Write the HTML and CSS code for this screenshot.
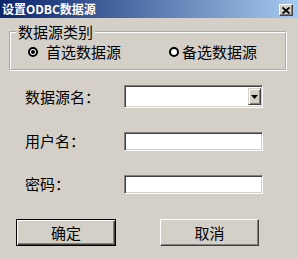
FILE: index.html
```html
<!DOCTYPE html>
<html>
<head>
    <meta charset="utf-8" />
    <title>设置ODBC数据源</title>
    <link rel="stylesheet" href="styles.css">
</head>
<body>
    <div class="titlebar">
        <span class="title">设置ODBC数据源</span>
        <span class="close">
            <svg width="8" height="7" viewBox="0 0 8 7"><path d="M0.5 0.5 L7.5 6.5 M7.5 0.5 L0.5 6.5" stroke="#000" stroke-width="1.8" /></svg>
        </span>
    </div>

    <div class="content">
        <fieldset class="group">
            <legend>数据源类别</legend>
            <div class="radios">
                <label class="radio-item first"><span class="radio checked"></span>首选数据源</label>
                <label class="radio-item second"><span class="radio"></span>备选数据源</label>
            </div>
        </fieldset>

        <div class="form">
            <span class="label">数据源名：</span>
            <div class="combo sunken">
                <span class="combo-text"></span>
                <span class="drop"><svg width="7" height="4" viewBox="0 0 7 4"><path d="M0 0 H7 L3.5 4 Z" fill="#000" /></svg></span>
            </div>

            <span class="label">用户名：</span>
            <div class="input sunken"></div>

            <span class="label">密码：</span>
            <div class="input sunken"></div>
        </div>

        <div class="buttons">
            <button class="btn default">确定</button>
            <button class="btn cancel">取消</button>
        </div>
    </div>
</body>
</html>
```

FILE: styles.css
```css
body {
    margin: 0;
    width: 298px;
    height: 259px;
    overflow: hidden;
    background-color: #d4d0c8;
    font-family: "Noto Sans CJK SC", "Liberation Sans", sans-serif;
    font-size: 15px;
    color: #000;
}

.titlebar {
    height: 18px;
    display: flex;
    justify-content: space-between;
    align-items: flex-start;
    padding: 0 5px 0 2px;
    background: linear-gradient(to right, #0a246a, #a6caf0);
}

.title {
    color: #fff;
    font-weight: bold;
    font-size: 12px;
    line-height: 18px;
}

.close {
    width: 14px;
    height: 12px;
    margin-top: 4px;
    box-sizing: border-box;
    display: flex;
    align-items: center;
    justify-content: center;
    background-color: #d4d0c8;
    border: 1px solid;
    border-color: #fff #404040 #404040 #fff;
    box-shadow: inset -1px -1px 0 #808080;
}

.content {
    padding: 5px 11px 0 9px;
}

.group {
    margin: 0;
    padding: 1px 0 7px 0;
    border: 2px groove #fff;
}

.group legend {
    margin-left: 5px;
    padding: 0 2px;
    line-height: 18px;
}

.radios {
    display: flex;
    height: 20px;
    align-items: center;
    padding-left: 17px;
}

.radio-item {
    display: flex;
    align-items: center;
    line-height: 20px;
}

.radio-item.first .radio {
    margin-right: 8px;
}

.radio-item.second {
    margin-left: 48px;
}

.radio-item.second .radio {
    margin-right: 3px;
}

.radio {
    width: 10px;
    height: 10px;
    box-sizing: border-box;
    border: 2px solid #000;
    border-radius: 50%;
    background-color: #fff;
    position: relative;
}

.radio.checked::after {
    content: "";
    position: absolute;
    left: 1px;
    top: 1px;
    width: 4px;
    height: 4px;
    border-radius: 50%;
    background-color: #000;
}

.form {
    display: grid;
    grid-template-columns: 99px 139px;
    row-gap: 23px;
    align-items: center;
    margin-top: 14px;
    padding-left: 16px;
}

.label {
    line-height: 20px;
}

.sunken {
    box-sizing: border-box;
    background-color: #fff;
    border: 1px solid;
    border-color: #808080 #fff #fff #808080;
    box-shadow: inset 1px 1px 0 #404040, inset -1px -1px 0 #d4d0c8;
}

.combo {
    height: 23px;
    display: flex;
    padding: 2px 1px 2px 2px;
}

.combo-text {
    flex: 1;
}

.drop {
    width: 13px;
    box-sizing: border-box;
    display: flex;
    align-items: center;
    justify-content: center;
    background-color: #d4d0c8;
    border: 1px solid;
    border-color: #d4d0c8 #404040 #404040 #d4d0c8;
    box-shadow: inset 1px 1px 0 #fff, inset -1px -1px 0 #808080;
}

.input {
    height: 19px;
}

.form .input:last-child {
    margin-top: 1px;
}

.buttons {
    display: flex;
    margin-top: 25px;
    padding-left: 7px;
}

.btn {
    width: 100px;
    height: 27px;
    padding: 0;
    box-sizing: border-box;
    font-family: inherit;
    font-size: 15px;
    color: #000;
    background-color: #d4d0c8;
    border: 1px solid;
    border-color: #fff #404040 #404040 #fff;
    box-shadow: inset -1px -1px 0 #808080, inset 1px 1px 0 #d4d0c8;
}

.btn.default {
    border-color: #000;
    box-shadow: inset 1px 1px 0 #fff, inset -1px -1px 0 #404040, inset -2px -2px 0 #808080;
}

.btn.cancel {
    width: 99px;
    margin-left: 44px;
}
```
